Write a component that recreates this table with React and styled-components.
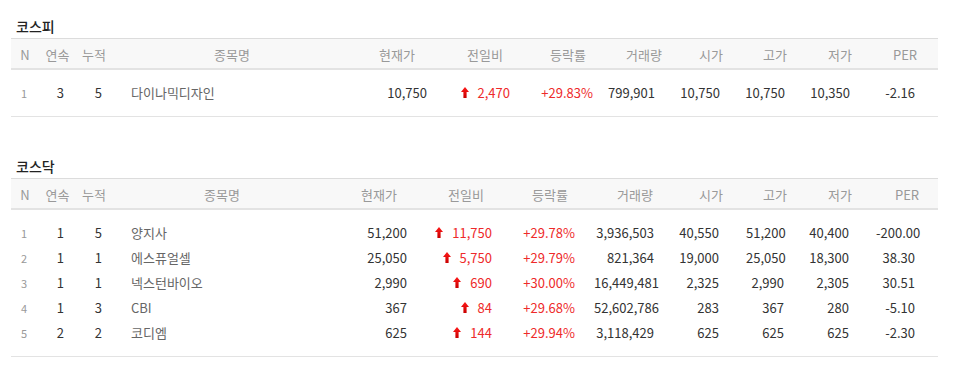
import React from "react";
import styled, { createGlobalStyle } from "styled-components";

const Global = createGlobalStyle`
  html, body { margin: 0; padding: 0; background: #fff; }
  body { font-family: "Noto Sans CJK KR", "Noto Sans", sans-serif; color: #333; }
`;

const Page = styled.div`
  width: 927px;
  padding-left: 11px;
`;

const Section = styled.section`
  padding-top: ${(p) => p.$top}px;
`;

const Title = styled.h2`
  margin: 0 0 2px;
  padding-left: 5px;
  height: 20px;
  line-height: 20px;
  font-size: 14px;
  font-weight: 500;
  color: #222;
`;

const Grid = styled.div`
  display: grid;
  grid-template-columns: ${(p) => p.$cols.map((c) => c + "px").join(" ")};
`;

const Head = styled(Grid)`
  height: 29px;
  background: #f8f8f8;
  border-top: 1px solid #dcdcdc;
  border-bottom: 2px solid #e3e3e3;
  align-items: center;
`;

const HeadCell = styled.div`
  text-align: center;
  font-size: 13px;
  color: #999;
  padding-top: 2px;
  white-space: nowrap;
`;

const Body = styled.div`
  padding: 10px 0 11px;
  border-bottom: 1px solid #e3e3e3;
`;

const Row = styled(Grid)`
  height: 25px;
  align-items: center;
`;

const Cell = styled.div`
  font-size: 13px;
  white-space: nowrap;
  text-align: ${(p) => (p.$left ? "left" : "right")};
  padding-left: ${(p) => (p.$left ? p.$pad : 0)}px;
  padding-right: ${(p) => (p.$left ? 0 : p.$pad)}px;
  color: ${(p) => (p.$red ? "#ee2a2a" : p.$tone || "#333")};
`;

const RankCell = styled(Cell)`
  font-size: 11px;
  color: #999;
`;

const Change = styled.div`
  display: flex;
  justify-content: flex-end;
  align-items: center;
  gap: 9px;
  padding-right: ${(p) => p.$pad}px;
  font-size: 13px;
  color: #ee2a2a;
`;

const Arrow = () => (
  <svg width="8" height="11" viewBox="0 0 8 11">
    <defs>
      <linearGradient id="ag" x1="0" y1="0" x2="0" y2="1">
        <stop offset="0" stopColor="#ff1a1a" />
        <stop offset="1" stopColor="#c80000" />
      </linearGradient>
    </defs>
    <path d="M4 0 L8 5 L5.6 5 L5.6 11 L2.4 11 L2.4 5 L0 5 Z" fill="url(#ag)" />
  </svg>
);

const HEADERS = ["N", "연속", "누적", "종목명", "현재가", "전일비", "등락률", "거래량", "시가", "고가", "저가", "PER"];

const kospi = {
  title: "코스피",
  cols: [28, 37, 36, 240, 90, 86, 80, 72, 62, 66, 64, 66],
  pads: [12, 12, 10, 19, 15, 18, 15, 25, 22, 23, 22, 23],
  rows: [["1", "3", "5", "다이나믹디자인", "10,750", "2,470", "+29.83%", "799,901", "10,750", "10,750", "10,350", "-2.16"]],
};

const kosdaq = {
  title: "코스닥",
  cols: [28, 37, 36, 220, 94, 80, 88, 82, 70, 58, 72, 62],
  pads: [12, 12, 10, 19, 19, 14, 19, 22, 27, 20, 27, 23],
  rows: [
    ["1", "1", "5", "양지사", "51,200", "11,750", "+29.78%", "3,936,503", "40,550", "51,200", "40,400", "-200.00"],
    ["2", "1", "1", "에스퓨얼셀", "25,050", "5,750", "+29.79%", "821,364", "19,000", "25,050", "18,300", "38.30"],
    ["3", "1", "1", "넥스턴바이오", "2,990", "690", "+30.00%", "16,449,481", "2,325", "2,990", "2,305", "30.51"],
    ["4", "1", "3", "CBI", "367", "84", "+29.68%", "52,602,786", "283", "367", "280", "-5.10"],
    ["5", "2", "2", "코디엠", "625", "144", "+29.94%", "3,118,429", "625", "625", "625", "-2.30"],
  ],
};

function Market({ data, top }) {
  const { cols, pads } = data;
  return (
    <Section $top={top}>
      <Title>{data.title}</Title>
      <Head $cols={cols}>
        {HEADERS.map((h) => (
          <HeadCell key={h}>{h}</HeadCell>
        ))}
      </Head>
      <Body>
        {data.rows.map((r) => (
          <Row key={r[3]} $cols={cols}>
            <RankCell $pad={pads[0]}>{r[0]}</RankCell>
            <Cell $pad={pads[1]}>{r[1]}</Cell>
            <Cell $pad={pads[2]}>{r[2]}</Cell>
            <Cell $left $pad={pads[3]} $tone="#666">{r[3]}</Cell>
            <Cell $pad={pads[4]}>{r[4]}</Cell>
            <Change $pad={pads[5]}>
              <Arrow />
              <span>{r[5]}</span>
            </Change>
            <Cell $pad={pads[6]} $red>{r[6]}</Cell>
            <Cell $pad={pads[7]}>{r[7]}</Cell>
            <Cell $pad={pads[8]}>{r[8]}</Cell>
            <Cell $pad={pads[9]}>{r[9]}</Cell>
            <Cell $pad={pads[10]}>{r[10]}</Cell>
            <Cell $pad={pads[11]}>{r[11]}</Cell>
          </Row>
        ))}
      </Body>
    </Section>
  );
}

export default function App() {
  return (
    <>
      <Global />
      <Page>
        <Market data={kospi} top={16} />
        <Market data={kosdaq} top={39} />
      </Page>
    </>
  );
}
